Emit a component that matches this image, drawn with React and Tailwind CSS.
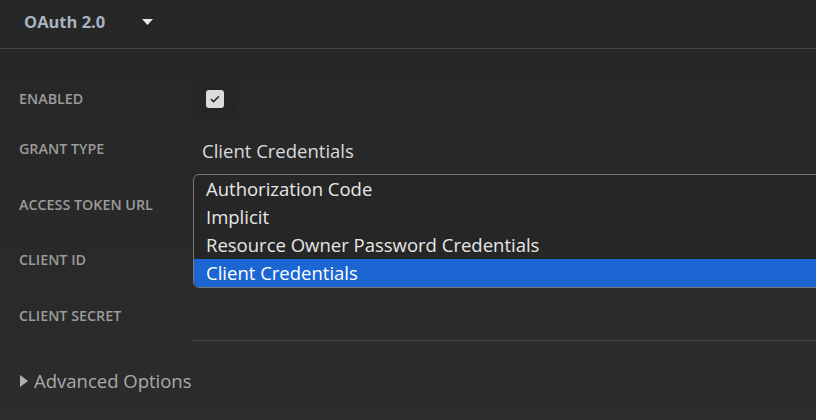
import { useState } from 'react'

const grantTypes = [
  'Authorization Code',
  'Implicit',
  'Resource Owner Password Credentials',
  'Client Credentials',
]

function Row({ label, height, labelClass = '', children }) {
  return (
    <div className="flex items-center" style={{ height }}>
      <div className={`w-[192px] shrink-0 pl-[19px] text-[14.3px] font-semibold uppercase text-[#9b9b9b] ${labelClass}`}>
        {label}
      </div>
      <div className="relative flex-1 h-full flex items-center">{children}</div>
    </div>
  )
}

function App() {
  const [selected] = useState('Client Credentials')

  return (
    <div
      className="w-[816px] h-[420px] overflow-hidden bg-gradient-to-b from-[#262626] to-[#2c2c2c] text-[#d8d8d8]"
      style={{ fontFamily: '"Open Sans", "Noto Sans", sans-serif' }}
    >
      <div className="h-[49px] flex items-center border-b border-[#474747] pl-[24px]">
        <span className="text-[16.5px] font-bold text-[#a8b3c0] pb-[4px]">OAuth 2.0</span>
        <svg className="ml-[37px] mb-[5px]" width="11" height="6" viewBox="0 0 11 6">
          <path d="M0 0h11L5.5 6z" fill="#e8e8e8" />
        </svg>
      </div>

      <div className="pt-[30px]">
        <Row label="Enabled" height={40}>
          <div className="w-[46px] h-[40px] bg-[#252525] flex items-center justify-center">
            <div className="w-[18px] h-[18px] rounded-[3px] bg-[#dcdcdc] flex items-center justify-center">
              <svg width="10" height="8" viewBox="0 0 10 8">
                <path d="M1 4.2l2.6 2.4L9 1.2" stroke="#2a2a2a" strokeWidth="1.6" fill="none" />
              </svg>
            </div>
          </div>
        </Row>

        <div className="h-[2px]" />

        <Row label="Grant Type" height={56}>
          <div className="pl-[10px] pt-[4px] text-[18.5px] text-[#dadada]">{selected}</div>
          <div className="absolute z-10 top-[53px] left-[1px] -right-[6px] border-[1.5px] border-[#777] rounded-l-[6px] bg-[#262626] overflow-hidden">
            {grantTypes.map((g) => (
              <div
                key={g}
                className={`h-[28px] pl-[12px] text-[18.5px] leading-[28px] ${g === selected ? 'bg-[#1b66d2] text-white' : 'text-[#e6e6e6]'}`}
              >
                {g}
              </div>
            ))}
          </div>
        </Row>

        <Row label="Access Token URL" height={56} />
        <Row label="Client ID" height={54} />
        <Row label="Client Secret" height={53} labelClass="pt-[5px]" />
        <div className="ml-[192px] border-t border-[#474747]" />

        <div className="flex items-center pl-[20px] pt-[26px] text-[18.5px] text-[#a9a9a9]">
          <svg width="8" height="12" viewBox="0 0 8 12">
            <path d="M0 0l8 6-8 6z" fill="#b0b0b0" />
          </svg>
          <span className="ml-[6px]">Advanced Options</span>
        </div>
      </div>
    </div>
  )
}

export default App
